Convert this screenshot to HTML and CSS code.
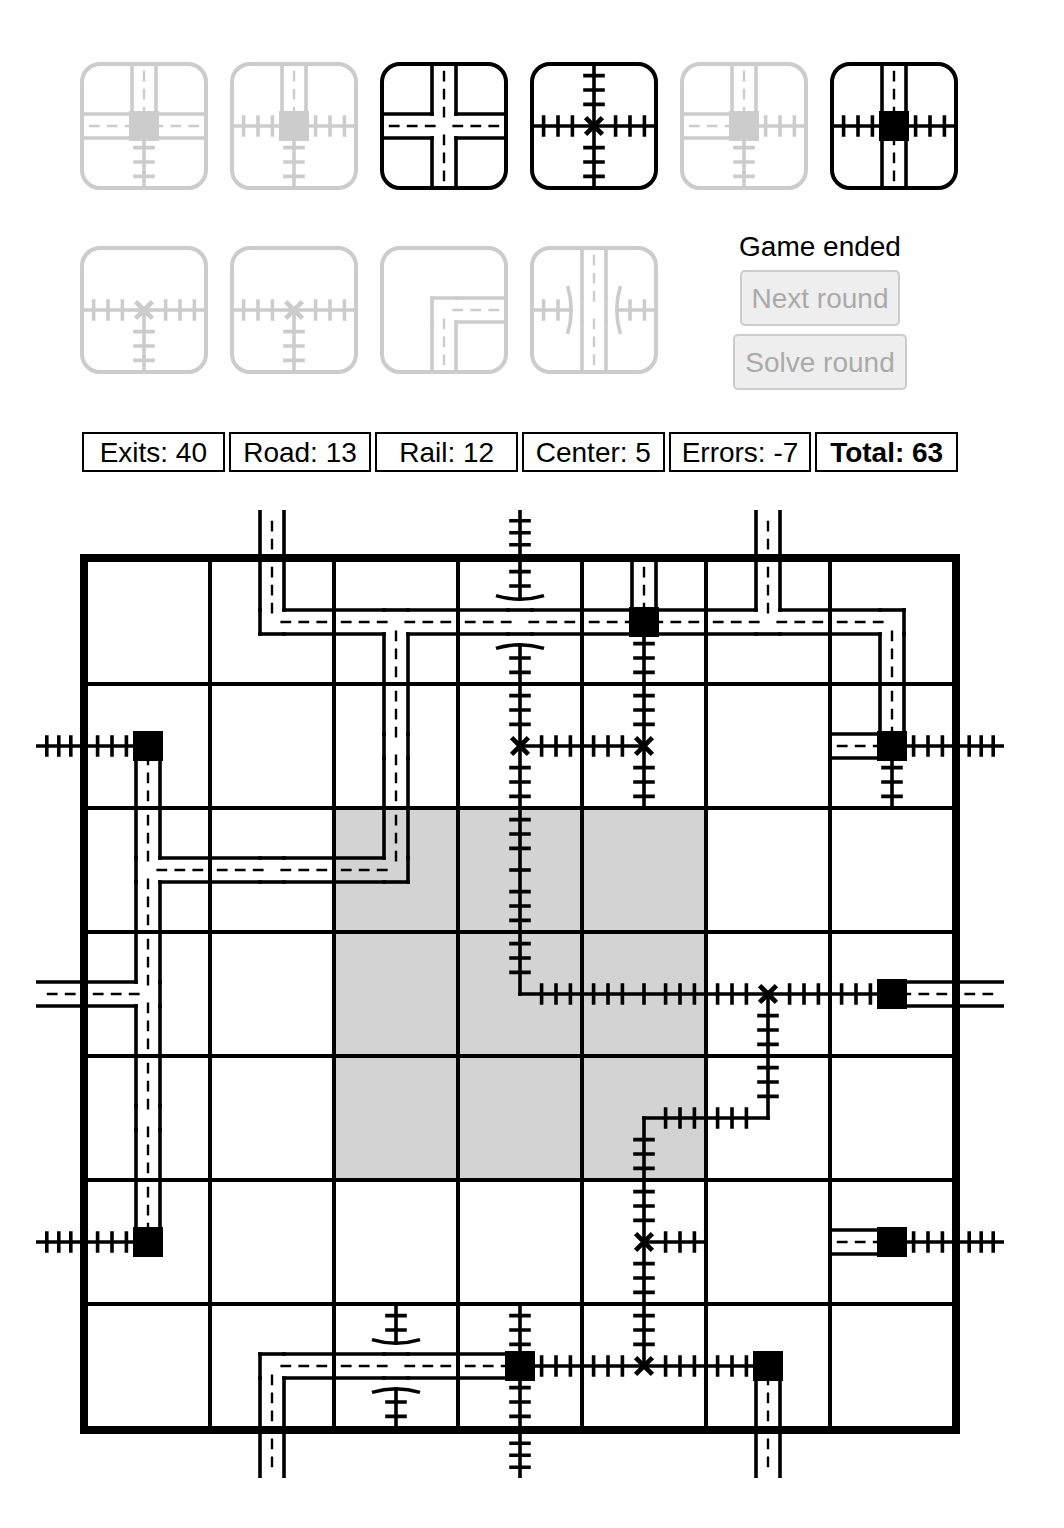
FILE: index.html
```html
<!DOCTYPE html>
<html lang="en">
<head>
<meta charset="utf-8">
<meta name="viewport" content="width=device-width, initial-scale=1">
<title>Road and rail game</title>
<link rel="stylesheet" href="styles.css">
</head>
<body>
<!-- Route pieces on a 100 x 100 cell: r = road arm, c = closed road side, l = rail arm, b = rail arm under a bridge -->
<svg class="defs" width="0" height="0" aria-hidden="true">
  <defs>
    <g id="rn"><path class="line" d="M40 0V41.5M60 0V41.5"/><path class="dash" d="M50 4V13M50 19V28M50 34V43"/></g>
    <g id="re"><use href="#rn" transform="rotate(90 50 50)"/></g>
    <g id="rs"><use href="#rn" transform="rotate(180 50 50)"/></g>
    <g id="rw"><use href="#rn" transform="rotate(270 50 50)"/></g>
    <path id="cn" class="line" d="M38.5 40H61.5"/>
    <path id="ce" class="line" d="M60 38.5V61.5"/>
    <path id="cs" class="line" d="M38.5 60H61.5"/>
    <path id="cw" class="line" d="M40 38.5V61.5"/>
    <path id="ln" class="line" d="M50 0V51.5M41 8H59M41 20H59M41 32H59"/>
    <g id="le"><use href="#ln" transform="rotate(90 50 50)"/></g>
    <g id="ls"><use href="#ln" transform="rotate(180 50 50)"/></g>
    <g id="lw"><use href="#ln" transform="rotate(270 50 50)"/></g>
    <path id="bn" class="line" d="M50 0V31M41 8H59M41 20H59M30 28Q50 34 70 28"/>
    <g id="bs"><use href="#bn" transform="rotate(180 50 50)"/></g>
    <path id="x" class="cross" d="M43 43L57 57M57 43L43 57"/>
    <rect id="st" class="station" x="37.5" y="37.5" width="25" height="25"/>
    <g id="roadEW"><use href="#re"/><use href="#rw"/><use href="#cn"/><use href="#cs"/></g>
    <g id="roadNS"><use href="#rn"/><use href="#rs"/><use href="#ce"/><use href="#cw"/></g>
    <g id="bridge"><use href="#roadEW"/><use href="#bn"/><use href="#bs"/></g>
    <g id="roadExit"><path class="wide-line" d="M-12 0V46M12 0V46"/><path class="wide-dash" d="M0 10.8V21.6M0 28.8V39.6"/></g>
    <path id="railExit" class="wide-line" d="M0 0V46M-10.8 10.8H10.8M-10.8 22.8H10.8M-10.8 34.8H10.8"/>
  </defs>
</svg>

<main class="page">
  <section class="tray" aria-label="Dice">
    <div class="tile used"><svg viewBox="0 0 100 100"><use href="#rn"/><use href="#re"/><use href="#rw"/><use href="#ls"/><use href="#st"/></svg></div>
    <div class="tile used"><svg viewBox="0 0 100 100"><use href="#rn"/><use href="#le"/><use href="#lw"/><use href="#ls"/><use href="#st"/></svg></div>
    <div class="tile"><svg viewBox="0 0 100 100"><use href="#rn"/><use href="#re"/><use href="#rs"/><use href="#rw"/></svg></div>
    <div class="tile"><svg viewBox="0 0 100 100"><use href="#ln"/><use href="#le"/><use href="#ls"/><use href="#lw"/><use href="#x"/></svg></div>
    <div class="tile used"><svg viewBox="0 0 100 100"><use href="#rn"/><use href="#le"/><use href="#ls"/><use href="#rw"/><use href="#st"/></svg></div>
    <div class="tile"><svg viewBox="0 0 100 100"><use href="#rn"/><use href="#le"/><use href="#rs"/><use href="#lw"/><use href="#st"/></svg></div>
    <div class="tile used"><svg viewBox="0 0 100 100"><use href="#le"/><use href="#ls"/><use href="#lw"/><use href="#x"/></svg></div>
    <div class="tile used"><svg viewBox="0 0 100 100"><use href="#le"/><use href="#ls"/><use href="#lw"/><use href="#x"/></svg></div>
    <div class="tile used"><svg viewBox="0 0 100 100"><use href="#re"/><use href="#rs"/><use href="#cn"/><use href="#cw"/></svg></div>
    <div class="tile used"><svg viewBox="0 0 100 100"><use href="#bridge" transform="rotate(90 50 50)"/></svg></div>
    <div class="controls">
      <p class="status">Game ended</p>
      <button type="button" class="action" disabled>Next round</button>
      <button type="button" class="action" disabled>Solve round</button>
    </div>
  </section>

  <ul class="scores">
    <li>Exits: 40</li>
    <li>Road: 13</li>
    <li>Rail: 12</li>
    <li>Center: 5</li>
    <li>Errors: -7</li>
    <li class="total">Total: 63</li>
  </ul>

  <svg class="board" viewBox="0 0 968 968" role="img" aria-label="Game board">
    <rect class="center" x="300" y="300" width="370" height="370"/>
    <path class="grid" d="M174 52V916M298 52V916M422 52V916M546 52V916M670 52V916M794 52V916M52 174H916M52 298H916M52 422H916M52 546H916M52 670H916M52 794H916"/>
    <rect class="frame" x="48" y="48" width="872" height="872"/>

    <!-- exits -->
    <g id="outerRoads"><use href="#roadExit" x="236"/><use href="#railExit" x="484"/><use href="#roadExit" x="732"/></g>
    <use href="#outerRoads" transform="rotate(180 484 484)"/>
    <g id="outerRails"><g transform="rotate(90 484 484)"><use href="#railExit" x="236"/><use href="#roadExit" x="484"/><use href="#railExit" x="732"/></g></g>
    <use href="#outerRails" transform="rotate(180 484 484)"/>

    <!-- row 1 -->
    <g transform="translate(176 52) scale(1.2)"><use href="#rn"/><use href="#re"/><use href="#cs"/><use href="#cw"/></g>
    <g transform="translate(300 52) scale(1.2)"><use href="#re"/><use href="#rw"/><use href="#rs"/><use href="#cn"/></g>
    <g transform="translate(424 52) scale(1.2)"><use href="#bridge"/></g>
    <g transform="translate(548 52) scale(1.2)"><use href="#rn"/><use href="#re"/><use href="#rw"/><use href="#ls"/><use href="#st"/></g>
    <g transform="translate(672 52) scale(1.2)"><use href="#rn"/><use href="#re"/><use href="#rw"/><use href="#cs"/></g>
    <g transform="translate(796 52) scale(1.2)"><use href="#rw"/><use href="#rs"/><use href="#cn"/><use href="#ce"/></g>
    <!-- row 2 -->
    <g transform="translate(52 176) scale(1.2)"><use href="#lw"/><use href="#rs"/><use href="#st"/></g>
    <g transform="translate(300 176) scale(1.2)"><use href="#roadNS"/></g>
    <g transform="translate(424 176) scale(1.2)"><use href="#ln"/><use href="#le"/><use href="#ls"/><use href="#x"/></g>
    <g transform="translate(548 176) scale(1.2)"><use href="#ln"/><use href="#lw"/><use href="#ls"/><use href="#x"/></g>
    <g transform="translate(796 176) scale(1.2)"><use href="#rn"/><use href="#rw"/><use href="#le"/><use href="#ls"/><use href="#st"/></g>
    <!-- row 3 -->
    <g transform="translate(52 300) scale(1.2)"><use href="#rn"/><use href="#re"/><use href="#rs"/><use href="#cw"/></g>
    <g transform="translate(176 300) scale(1.2)"><use href="#roadEW"/></g>
    <g transform="translate(300 300) scale(1.2)"><use href="#rn"/><use href="#rw"/><use href="#ce"/><use href="#cs"/></g>
    <g transform="translate(424 300) scale(1.2)"><use href="#ln"/><use href="#ls"/><path class="line" d="M41 50H59"/></g>
    <!-- row 4 -->
    <g transform="translate(52 424) scale(1.2)"><use href="#rn"/><use href="#rs"/><use href="#rw"/><use href="#ce"/></g>
    <g transform="translate(424 424) scale(1.2)"><use href="#ln"/><use href="#le"/></g>
    <g transform="translate(548 424) scale(1.2)"><use href="#le"/><use href="#lw"/><path class="line" d="M50 41V59"/></g>
    <g transform="translate(672 424) scale(1.2)"><use href="#le"/><use href="#lw"/><use href="#ls"/><use href="#x"/></g>
    <g transform="translate(796 424) scale(1.2)"><use href="#lw"/><use href="#re"/><use href="#st"/></g>
    <!-- row 5 -->
    <g transform="translate(52 548) scale(1.2)"><use href="#roadNS"/></g>
    <g transform="translate(548 548) scale(1.2)"><use href="#le"/><use href="#ls"/></g>
    <g transform="translate(672 548) scale(1.2)"><use href="#ln"/><use href="#lw"/></g>
    <!-- row 6 -->
    <g transform="translate(52 672) scale(1.2)"><use href="#rn"/><use href="#lw"/><use href="#st"/></g>
    <g transform="translate(548 672) scale(1.2)"><use href="#ln"/><use href="#le"/><use href="#ls"/><use href="#x"/></g>
    <g transform="translate(796 672) scale(1.2)"><use href="#rw"/><use href="#le"/><use href="#st"/></g>
    <!-- row 7 -->
    <g transform="translate(176 796) scale(1.2)"><use href="#re"/><use href="#rs"/><use href="#cn"/><use href="#cw"/></g>
    <g transform="translate(300 796) scale(1.2)"><use href="#bridge"/></g>
    <g transform="translate(424 796) scale(1.2)"><use href="#rw"/><use href="#ln"/><use href="#le"/><use href="#ls"/><use href="#st"/></g>
    <g transform="translate(548 796) scale(1.2)"><use href="#ln"/><use href="#le"/><use href="#lw"/><use href="#x"/></g>
    <g transform="translate(672 796) scale(1.2)"><use href="#lw"/><use href="#rs"/><use href="#st"/></g>
  </svg>
</main>
</body>
</html>
```
FILE: styles.css
```css
* { box-sizing: border-box; }

body {
  margin: 0;
  background: #fff;
  color: #000;
  font: 28px/32px "Liberation Sans", Arial, Helvetica, sans-serif;
}

.defs { position: absolute; }

.page {
  max-width: 1200px;
  padding: 62px 60px 50px 36px;
}

.tray {
  display: grid;
  grid-template-columns: repeat(6, minmax(0, 1fr));
  gap: 40px 22px;
  align-items: center;
  margin: 0 46px 42px 44px;
}

.tile {
  aspect-ratio: 1;
  border: 4px solid currentColor;
  border-radius: 20px;
  overflow: hidden;
}

.tile.used { color: #ccc; }

.tile svg { display: block; width: 100%; }

.controls {
  grid-column: span 2;
  display: flex;
  flex-direction: column;
  align-items: center;
  gap: 8px;
  padding-left: 2px;
}

.status {
  margin: 0;
  padding-top: 2px;
  line-height: 30px;
}

.action {
  height: 56px;
  padding: 2px 10px 0;
  border: 2px solid #ccc;
  border-radius: 5px;
  background: #eee;
  color: #aaa;
  font: inherit;
  white-space: nowrap;
}

.scores {
  display: grid;
  grid-template-columns: repeat(6, minmax(0, 1fr));
  gap: 4px;
  margin: 0 46px 38px;
  padding: 0;
  list-style: none;
  text-align: center;
  white-space: nowrap;
}

.scores li {
  height: 40px;
  border: 2px solid #000;
  line-height: 38px;
}

.scores .total { font-weight: bold; }

.board { display: block; width: 100%; }

.line, .dash, .cross, .wide-line, .wide-dash, .grid, .frame {
  fill: none;
  stroke: currentColor;
}

.line { stroke-width: 3; }
.dash { stroke-width: 2; }
.cross { stroke-width: 4; }
.wide-line { stroke-width: 3.6; }
.wide-dash { stroke-width: 2.4; }
.station { fill: currentColor; }
.grid { stroke-width: 4; }
.frame { stroke-width: 8; }
.center { fill: #d3d3d3; }
```
